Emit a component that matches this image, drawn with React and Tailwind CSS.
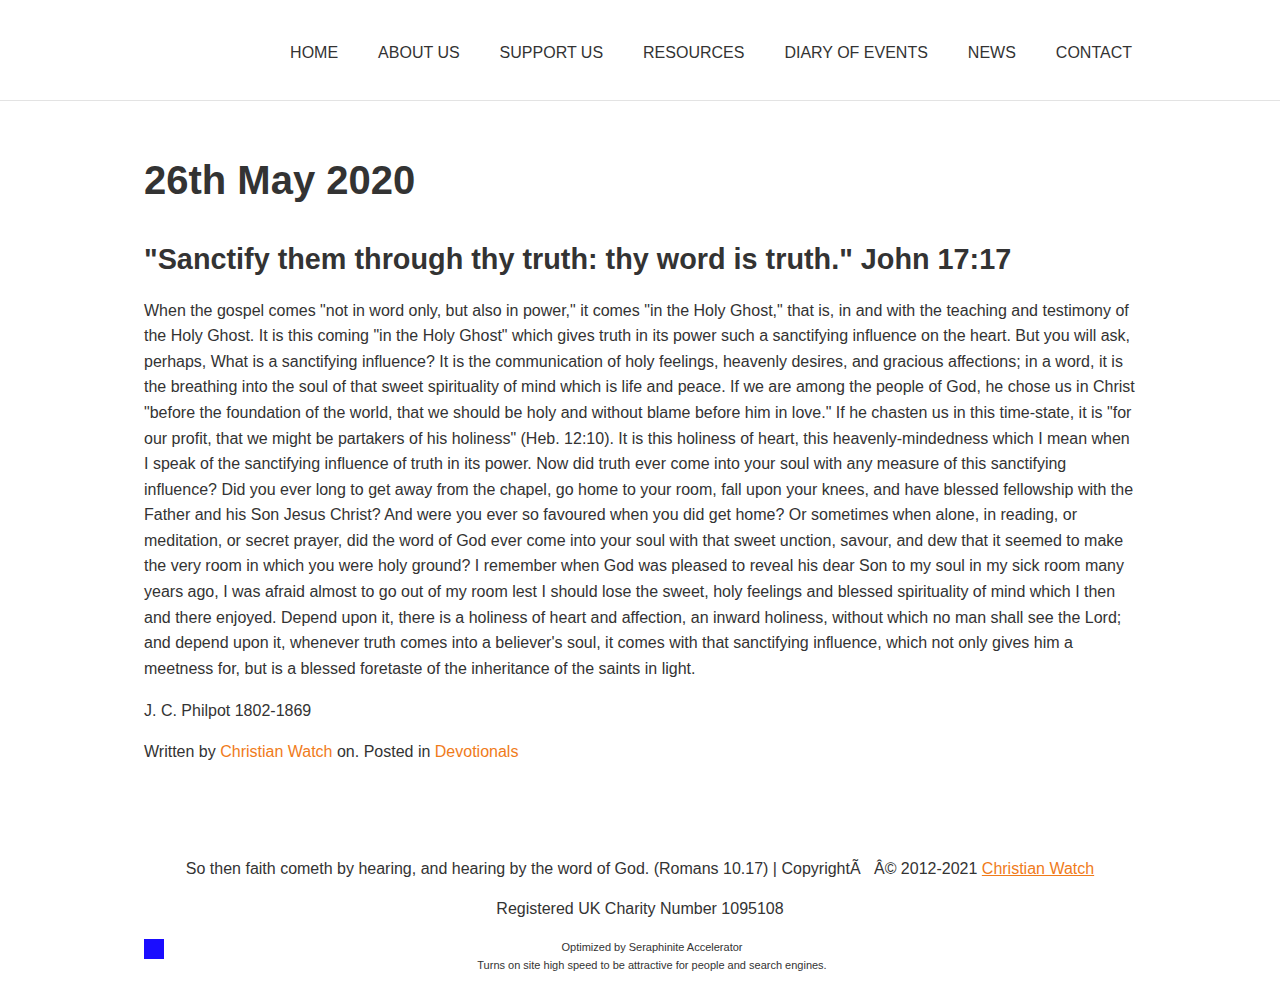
import React from 'react';

const navItems = ['HOME', 'ABOUT US', 'SUPPORT US', 'RESOURCES', 'DIARY OF EVENTS', 'NEWS', 'CONTACT'];

const body = `When the gospel comes "not in word only, but also in power," it comes "in the Holy Ghost," that is, in and with the teaching and testimony of the Holy Ghost. It is this coming "in the Holy Ghost" which gives truth in its power such a sanctifying influence on the heart. But you will ask, perhaps, What is a sanctifying influence? It is the communication of holy feelings, heavenly desires, and gracious affections; in a word, it is the breathing into the soul of that sweet spirituality of mind which is life and peace. If we are among the people of God, he chose us in Christ "before the foundation of the world, that we should be holy and without blame before him in love." If he chasten us in this time-state, it is "for our profit, that we might be partakers of his holiness" (Heb. 12:10). It is this holiness of heart, this heavenly-mindedness which I mean when I speak of the sanctifying influence of truth in its power. Now did truth ever come into your soul with any measure of this sanctifying influence? Did you ever long to get away from the chapel, go home to your room, fall upon your knees, and have blessed fellowship with the Father and his Son Jesus Christ? And were you ever so favoured when you did get home? Or sometimes when alone, in reading, or meditation, or secret prayer, did the word of God ever come into your soul with that sweet unction, savour, and dew that it seemed to make the very room in which you were holy ground? I remember when God was pleased to reveal his dear Son to my soul in my sick room many years ago, I was afraid almost to go out of my room lest I should lose the sweet, holy feelings and blessed spirituality of mind which I then and there enjoyed. Depend upon it, there is a holiness of heart and affection, an inward holiness, without which no man shall see the Lord; and depend upon it, whenever truth comes into a believer's soul, it comes with that sanctifying influence, which not only gives him a meetness for, but is a blessed foretaste of the inheritance of the saints in light.`;

export default function App() {
  return (
    <div className="min-h-screen bg-white text-[#333] font-['Liberation_Sans',Arial,sans-serif]">
      {/* Header */}
      <header className="h-[101px] border-b border-[#e3e3e3]">
        <nav className="w-[992px] mx-auto h-full flex items-center justify-end pr-1">
          <ul className="flex items-center gap-10 text-base text-[#333] pt-[6px]">
            {navItems.map((item) => (
              <li key={item}>
                <a href="#">{item}</a>
              </li>
            ))}
          </ul>
        </nav>
      </header>

      {/* Main */}
      <main className="w-[992px] mx-auto pt-[55px]">
        <h1 className="text-[40px] font-bold leading-[1.2]">26th May 2020</h1>
        <h2 className="text-[28.8px] font-bold leading-[1.2] mt-[38px]">
          "Sanctify them through thy truth: thy word is truth." John 17:17
        </h2>
        <p className="text-base leading-[1.6] mt-[21px]">{body}</p>
        <p className="text-base leading-[1.6] mt-[17px]">J. C. Philpot 1802-1869</p>
        <p className="text-base leading-[1.6] mt-[15px]">
          Written by <a href="#" className="text-[#f07b1a]">Christian Watch</a> on. Posted in{' '}
          <a href="#" className="text-[#f07b1a]">Devotionals</a>
        </p>
      </main>

      {/* Footer */}
      <footer className="w-[992px] mx-auto mt-[91px] text-center text-base leading-[1.6]">
        <p>
          So then faith cometh by hearing, and hearing by the word of God. (Romans 10.17) | CopyrightÃ{'\u00a0\u00a0 '}Â© 2012-2021{' '}
          <a href="#" className="text-[#f07b1a] underline">Christian Watch</a>
        </p>
        <p className="mt-[15px]">Registered UK Charity Number 1095108</p>
        <div className="relative mt-[16px] pb-4">
          <div className="absolute left-0 top-[1px] w-5 h-5 bg-[#1a0dff]"></div>
          <div className="text-[11px] leading-[18px] pl-6">
            <p>Optimized by Seraphinite Accelerator</p>
            <p>Turns on site high speed to be attractive for people and search engines.</p>
          </div>
        </div>
      </footer>
    </div>
  );
}
